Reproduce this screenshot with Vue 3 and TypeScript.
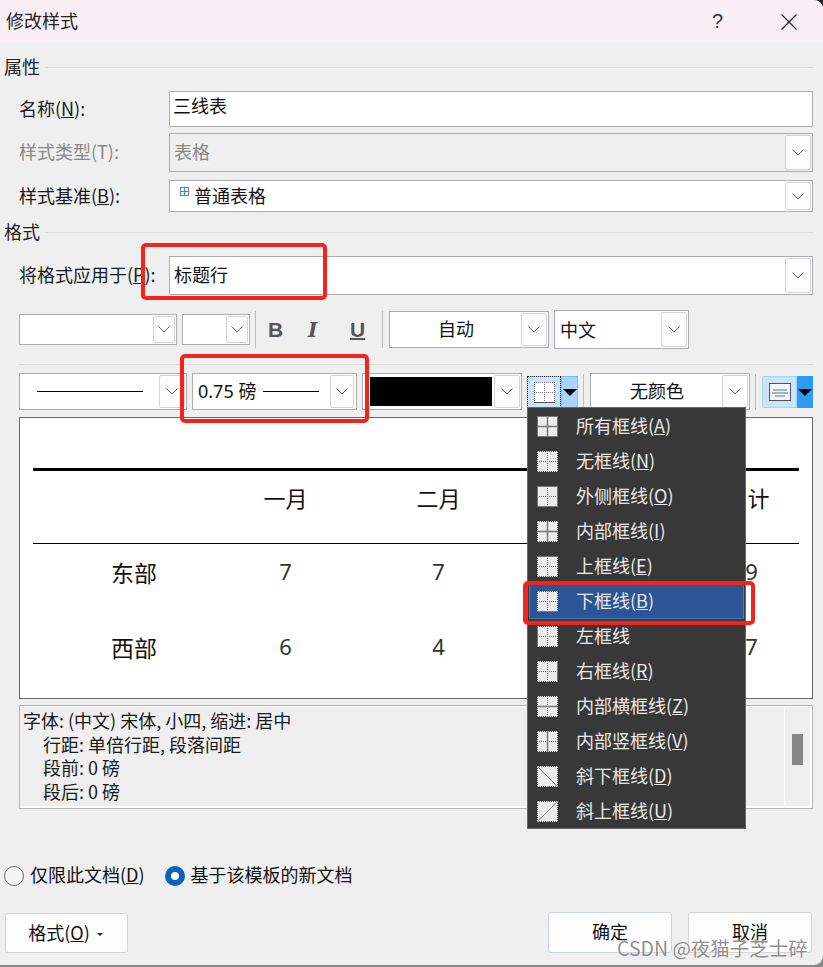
<script setup lang="ts">
interface Item { label: string; key?: string; s: string; sel?: boolean }
const items: Item[] = [
  { label: '所有框线', key: 'A', s: 'trblhv' },
  { label: '无框线', key: 'N', s: '' },
  { label: '外侧框线', key: 'O', s: 'trbl' },
  { label: '内部框线', key: 'I', s: 'hv' },
  { label: '上框线', key: 'E', s: 't' },
  { label: '下框线', key: 'B', s: 'b', sel: true },
  { label: '左框线', s: 'l' },
  { label: '右框线', key: 'R', s: 'r' },
  { label: '内部横框线', key: 'Z', s: 'h' },
  { label: '内部竖框线', key: 'V', s: 'v' },
  { label: '斜下框线', key: 'D', s: 'd' },
  { label: '斜上框线', key: 'U', s: 'u' },
]
const rows = [
  { name: '', v: ['一月', '二月', '', '计'] },
  { name: '东部', v: ['7', '7', '', '9'] },
  { name: '西部', v: ['6', '4', '', '7'] },
]
const desc = ['行距: 单倍行距, 段落间距', '段前: 0 磅', '段后: 0 磅']
const isGrid = (s: string) => !s.includes('d') && !s.includes('u')
</script>

<template>
  <div class="page">
    <div class="dialog">
      <header class="title">
        <span class="title-text">修改样式</span>
        <span class="help">?</span>
        <svg class="close" width="16" height="16" viewBox="0 0 16 16"><path d="M.5.5l15 15M15.500.5l-15 15" stroke="#222" stroke-width="1.200" fill="none" /></svg>
      </header>

      <main class="body">
        <div class="legend legend-a"><span>属性</span><i></i></div>

        <div class="row row-name">
          <label>名称(<u>N</u>):</label>
          <div class="field f-name">三线表</div>
        </div>
        <div class="row row-type">
          <label class="dim">样式类型(T):</label>
          <div class="field f-type dim">表格<span class="chev"><svg width="12" height="7" viewBox="0 0 12 7"><path d="M.5.5L6 6l5.500-5.500" /></svg></span></div>
        </div>
        <div class="row row-base">
          <label>样式基准(<u>B</u>):</label>
          <div class="field f-base">
            <svg class="tiny" width="9" height="9" viewBox="0 0 9 9"><rect x=".5" y=".5" width="8" height="8" fill="#eef5f5" stroke="#5a8f8f" /><path d="M4.500 0v9M0 4.500h9" stroke="#3f8f8f" /></svg>
            普通表格<span class="chev"><svg width="12" height="7" viewBox="0 0 12 7"><path d="M.5.5L6 6l5.500-5.500" /></svg></span>
          </div>
        </div>

        <div class="legend legend-b"><span>格式</span><i></i></div>

        <div class="row row-apply">
          <label>将格式应用于(<u>P</u>):</label>
          <div class="field f-apply">标题行<span class="chev"><svg width="12" height="7" viewBox="0 0 12 7"><path d="M.5.5L6 6l5.500-5.500" /></svg></span></div>
        </div>

        <div class="tools t-font">
          <div class="combo c-font"><span class="chev small"><svg width="12" height="7" viewBox="0 0 12 7"><path d="M.5.5L6 6l5.500-5.500" /></svg></span></div>
          <div class="combo c-size"><span class="chev small"><svg width="12" height="7" viewBox="0 0 12 7"><path d="M.5.5L6 6l5.500-5.500" /></svg></span></div>
          <i class="vsep"></i>
          <div class="biu">
            <b>B</b>
            <em>I</em>
            <span class="und">U</span>
          </div>
          <i class="vsep"></i>
          <div class="combo c-auto"><span class="center">自动</span><span class="chev"><svg width="12" height="7" viewBox="0 0 12 7"><path d="M.5.5L6 6l5.500-5.500" /></svg></span></div>
          <div class="combo c-lang"><span class="lang">中文</span><span class="chev"><svg width="12" height="7" viewBox="0 0 12 7"><path d="M.5.5L6 6l5.500-5.500" /></svg></span></div>
        </div>

        <div class="hline"></div>

        <div class="tools t-border">
          <div class="combo c-line"><span class="stroke"></span><span class="chev"><svg width="12" height="7" viewBox="0 0 12 7"><path d="M.5.5L6 6l5.500-5.500" /></svg></span></div>
          <div class="combo c-weight"><span class="wt">0.75 磅</span><span class="stroke thin"></span><span class="chev"><svg width="12" height="7" viewBox="0 0 12 7"><path d="M.5.5L6 6l5.500-5.500" /></svg></span></div>
          <div class="combo c-color"><span class="swatch"></span><span class="chev"><svg width="12" height="7" viewBox="0 0 12 7"><path d="M.5.5L6 6l5.500-5.500" /></svg></span></div>
          <div class="split s-border">
            <span class="split-main">
              <svg width="21" height="21" viewBox="0 0 21 21"><rect width="21" height="21" fill="#fff" /><path d="M.5 0v21M20.500 0v21M0 .5h21M10.500 0v21M0 10.500h21" stroke="#777" stroke-dasharray="1 1" /><path d="M0 20.500h21" stroke="#555" /></svg>
            </span>
            <span class="split-arrow"><i></i></span>
          </div>
          <i class="vsep short"></i>
          <div class="combo c-nofill"><span class="center">无颜色</span><span class="chev"><svg width="12" height="7" viewBox="0 0 12 7"><path d="M.5.5L6 6l5.500-5.500" /></svg></span></div>
          <i class="vsep short"></i>
          <div class="split s-shade">
            <span class="split-main">
              <svg width="22" height="18" viewBox="0 0 22 18"><rect x=".5" y=".5" width="21" height="17" fill="#f4f4f4" stroke="#555" /><path d="M4 7h14M3 10h16M6 13h10" stroke="#3f7fb8" /></svg>
            </span>
            <span class="split-arrow"><i></i></span>
          </div>
        </div>

        <section class="preview">
          <div class="rule"></div>
          <div v-for="(r, i) in rows" :key="i" class="trow" :class="'tr' + i">
            <span class="tname">{{ r.name }}</span>
            <span v-for="(c, j) in r.v" :key="j" class="tcell">{{ c }}</span>
          </div>
        </section>

        <section class="desc">
          <div class="desc-text">
            <p>字体: (中文) 宋体, 小四, 缩进: 居中</p>
            <p v-for="d in desc" :key="d" class="ind">{{ d }}</p>
          </div>
          <div class="track"><span class="thumb"></span></div>
        </section>

        <div class="radios">
          <span class="radio"></span><span class="rt1">仅限此文档(<u>D</u>)</span>
          <span class="radio on"></span><span>基于该模板的新文档</span>
        </div>

        <div class="footer">
          <button class="btn fmt">格式(<u>O</u>) <i class="caret"></i></button>
          <button class="btn ok">确定</button>
          <button class="btn cancel">取消</button>
        </div>
      </main>

      <ul class="menu">
        <li v-for="it in items" :key="it.label" :class="{ sel: it.sel }">
          <svg width="21" height="21" viewBox="0 0 21 21">
            <rect width="21" height="21" fill="#ececec" />
            <template v-if="isGrid(it.s)">
              <path d="M10.500 0v21M0 10.500h21" stroke="#777" stroke-dasharray="1 1" fill="none" />
              <path v-if="it.s.includes('h')" d="M0 10.500h21" stroke="#777" stroke-width="1.500" />
              <path v-if="it.s.includes('v')" d="M10.500 0v21" stroke="#777" stroke-width="1.500" />
            </template>
            <path d="M.5 0v21M20.500 0v21M0 .5h21M0 20.500h21" stroke="#555" stroke-dasharray="1 1" fill="none" />
            <path v-if="it.s.includes('t')" d="M0 .5h21" stroke="#777" />
            <path v-if="it.s.includes('b')" d="M0 20.500h21" stroke="#777" />
            <path v-if="it.s.includes('l')" d="M.5 0v21" stroke="#777" />
            <path v-if="it.s.includes('r')" d="M20.500 0v21" stroke="#777" />
            <path v-if="it.s.includes('d')" d="M0 0l21 21" stroke="#888" />
            <path v-if="it.s.includes('u')" d="M21 0L0 21" stroke="#888" />
          </svg>
          <span class="mt">{{ it.label }}<template v-if="it.key">(<u>{{ it.key }}</u>)</template></span>
        </li>
      </ul>

      <i class="mark m1"></i>
      <i class="mark m2"></i>
      <i class="mark m3"></i>
      <span class="wm">CSDN @夜猫子芝士碎</span>
    </div>
  </div>
</template>

<style>
html, body { margin: 0; padding: 0; background: #888; }
</style>

<style scoped>
.page {
  width: 823px;
  height: 967px;
  overflow: hidden;
  background: linear-gradient(#222 0, #555 30px, #8a8a8a 100%);
}
.dialog {
  position: relative;
  width: 823px;
  height: 965px;
  overflow: hidden;
  background: #efefef;
  border-radius: 0 9px 9px 0;
  color: #111;
  font: 18px/1.2 "Noto Sans CJK SC", "Noto Sans", sans-serif;
}
.title {
  height: 43px;
  background: #f8eef3;
  display: flex;
  align-items: center;
  padding: 0 26px 0 6px;
  box-sizing: border-box;
}
.title-text { flex: 1; margin-top: -1px; color: #222; }
.help { font: 20px "Liberation Sans", sans-serif; color: #333; margin-right: 58px; }
.body { padding: 0 10px 0 0; height: 919px; position: relative; box-sizing: border-box; }

.legend { display: flex; align-items: center; line-height: 24px; height: 24px; color: #222; }
.legend span { width: 45px; padding-left: 4px; padding-bottom: 2px; box-sizing: border-box; }
.legend i { flex: 1; height: 1px; background: #dcdcdc; }
.legend-a { margin-top: 12px; }
.legend-b { margin-top: 8px; }

.row { display: flex; align-items: center; padding-left: 19px; }
.row label { width: 150px; color: #1a1a1a; white-space: nowrap; }
.row label.dim { color: #8a8a8a; }
.row-type label, .row-apply label { padding-bottom: 2px; }
.row-name { margin-top: 12px; height: 36px; }
.row-type { margin-top: 6px; height: 39px; }
.row-base { margin-top: 8px; height: 32px; }
.row-apply { margin-top: 12px; height: 39px; }

.field {
  flex: 1;
  height: 100%;
  box-sizing: border-box;
  border: 1px solid #adadb1;
  background: #fff;
  position: relative;
  display: flex;
  align-items: center;
  padding-left: 3px;
}
.f-name { align-items: flex-start; padding-top: 3px; }
.f-type { background: #efefef; padding-left: 4px; padding-bottom: 2px; color: #888; }
.f-base { padding-left: 10px; }
.f-apply { padding-left: 4px; padding-bottom: 2px; }
.tiny { margin-right: 5px; margin-top: -10px; }

.chev {
  position: absolute;
  right: 1px;
  top: 1px;
  bottom: 1px;
  width: 26px;
  box-sizing: border-box;
  border: 1px solid #d4d4d4;
  border-radius: 2px;
  background: #fcfcfc;
  display: flex;
  align-items: center;
  justify-content: center;
}
.chev.small { width: 22px; }
.chev svg { fill: none; stroke: #666; stroke-width: 1; }
.c-weight .chev { width: 24px; right: 2px; }

.tools { display: flex; align-items: center; padding-left: 19px; }
.t-font { margin-top: 15px; height: 39px; }
.t-border { margin-top: 8px; height: 37px; }
.combo {
  position: relative;
  box-sizing: border-box;
  height: 100%;
  border: 1px solid #adadb1;
  background: #fff;
  display: flex;
  align-items: center;
}
.c-font { width: 158px; height: 31px; }
.c-size { width: 68px; height: 31px; margin-left: 5px; }
.vsep { width: 1px; height: 37px; background: #bdbdbd; margin-left: 5px; }
.biu { display: flex; width: 126px; padding-left: 14px; box-sizing: border-box; font: 21px "Liberation Sans", sans-serif; color: #555; }
.biu b { width: 40px; margin-left: -2px; }
.biu em { width: 42px; font: italic 700 20px "DejaVu Serif", serif; line-height: 24px; }
.und { text-decoration: underline; text-decoration-thickness: 2px; font-weight: 700; }
.biu + .vsep { margin-left: 0; }
.c-auto { width: 160px; height: 37px; margin-left: 6px; }
.c-lang { width: 135px; height: 39px; margin-left: 5px; }
.center { width: 132px; text-align: center; padding-bottom: 2px; }
.lang { padding-left: 5px; }
.hline { height: 1px; background: #dcdcdc; margin: 15px 0 0 19px; }

.c-line { width: 168px; padding-left: 17px; }
.c-weight { width: 165px; margin-left: 5px; padding-left: 5px; }
.c-color { width: 160px; margin-left: 5px; padding-left: 7px; }
.stroke { width: 106px; height: 1px; background: #000; }
.stroke.thin { width: 56px; margin-left: 7px; }
.wt { font-family: "Noto Sans", "Noto Sans CJK SC", sans-serif; }
.swatch { width: 122px; height: 29px; background: #000; }
.c-nofill { width: 160px; }
.split { display: flex; height: 32px; margin-top: 1px; }
.split-main {
  display: flex;
  align-items: center;
  justify-content: center;
  box-sizing: border-box;
  border: 1px solid #a9d3f7;
  background: #c9e4fb;
}
.split-arrow {
  display: flex;
  align-items: center;
  justify-content: center;
  box-sizing: border-box;
  width: 17px;
  background: #abd3f5;
  border: 1px solid #7fbcf0;
}
.split-arrow i { border: 7px solid transparent; border-top-color: #000; border-bottom: 0; width: 0; height: 0; display: block; }
.s-border { margin-left: 5px; }
.s-border .split-main { width: 34px; outline: 1px dotted #222; outline-offset: -1px; }
.short { height: 36px; }
.short + .c-nofill { margin-left: 6px; }
.s-shade { margin-left: 6px; }
.s-shade .split-main { width: 35px; border-radius: 2px 0 0 2px; }
.s-shade .split-arrow { width: 16px; background: #2b9bf5; border-color: #2b9bf5; }

.preview {
  position: relative;
  margin: 7px 0 0 19px;
  height: 282px;
  box-sizing: border-box;
  border: 1px solid #666;
  background: #fff;
  padding: 50px 13px 0;
}
.rule { height: 3px; background: #000; }
.trow {
  display: grid;
  grid-template-columns: 176px repeat(4, 153px);
  align-items: center;
  text-align: center;
  font-size: 22px;
  color: #111;
  box-sizing: border-box;
}
.tr0 { height: 73px; padding-bottom: 20px; position: relative; }
.tr0::after { content: ""; position: absolute; left: 0; right: 0; bottom: 0; height: 1px; background: #000; }
.tr1, .tr2 { height: 75px; padding-bottom: 17px; }
.tname { font-size: 23px; padding-left: 26px; }
.tr0 .tcell:last-child { padding-left: 28px; }
.tr1 .tcell, .tr2 .tcell { font-family: "Noto Sans", sans-serif; font-size: 22px; color: #333; margin-top: -4px; }
.tr1 .tcell:last-child, .tr2 .tcell:last-child { padding-left: 14px; }

.desc {
  display: flex;
  margin: 6px 0 0 19px;
  height: 104px;
  box-sizing: border-box;
  border: 1px solid #b4b4b4;
  background: #fff;
  padding: 1px 2px 2px 0;
}
.desc-text { flex: 1; line-height: 23.500px; padding: 2px 0 0 3px; color: #1a1a1a; background: #efefef; }
.desc p { margin: 0; }
.ind { padding-left: 20px; }
.track { width: 25px; border-left: 1px solid #fff; background: #efefef; position: relative; }
.thumb { position: absolute; left: 7px; top: 27px; width: 11px; height: 31px; background: #868686; }

.radios { display: flex; align-items: center; height: 24px; margin-top: 55px; padding-left: 4px; }
.radios span:not(.radio) { margin-left: 6px; padding-bottom: 2px; }
.radios .rt1 { margin-right: 20px; }
.radio { width: 20px; height: 20px; border: 1px solid #6a6a6a; border-radius: 50%; background: #f4f4f4; box-sizing: border-box; }
.radio.on { border: 6px solid #0a63b8; background: #fff; }

.footer { display: flex; margin-top: 24px; padding-left: 5px; align-items: flex-start; }
.btn {
  box-sizing: border-box;
  height: 41px;
  width: 124px;
  border: 1px solid #d4d4d4;
  border-radius: 3px;
  background: #fdfdfd;
  font: 18px "Noto Sans CJK SC", sans-serif;
  color: #111;
  padding: 0 0 3px;
}
.fmt { height: 40px; width: 123px; margin-top: 1px; padding-right: 2px; }
.ok { margin-left: 420px; border-color: #c6d5e4; }
.cancel { margin-left: 16px; }
.caret { display: inline-block; border: 3.500px solid transparent; border-top-color: #222; border-bottom: 0; vertical-align: middle; margin-left: 3px; }

.menu {
  position: absolute;
  left: 527px;
  top: 407px;
  width: 219px;
  height: 422px;
  margin: 0;
  padding: 1px 1px;
  box-sizing: border-box;
  list-style: none;
  background: #383838;
  border: 1px solid #666;
}
.menu li {
  height: 35px;
  box-sizing: border-box;
  display: flex;
  align-items: center;
  padding-left: 7px;
  color: #e8e8e8;
  border: 1px solid transparent;
}
.menu li.sel { background: #2b5597; border-color: #4a76b8; }
.mt { margin-left: 18px; white-space: nowrap; padding-bottom: 2px; }

.mark { position: absolute; border: 4px solid #f5231b; border-radius: 5px; box-sizing: border-box; }
.m1 { left: 141px; top: 243px; width: 186px; height: 57px; }
.m2 { left: 180px; top: 354px; width: 189px; height: 69px; }
.m3 { left: 523px; top: 581px; width: 232px; height: 44px; }

.wm {
  position: absolute;
  left: 617px;
  top: 936px;
  font-size: 19.500px;
  line-height: 23px;
  color: rgba(100, 100, 100, .72);
  text-shadow: 0 0 2px rgba(255, 255, 255, .7);
  white-space: nowrap;
}
</style>
